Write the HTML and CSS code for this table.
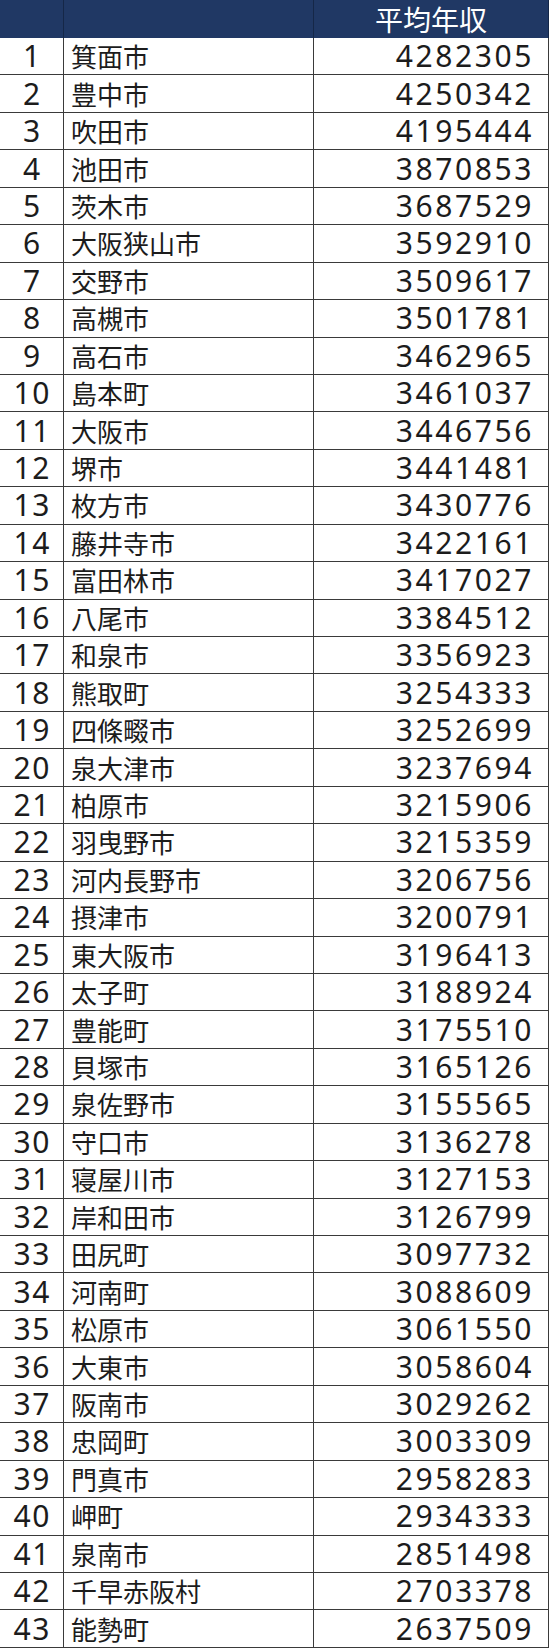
FILE: index.html
```html
<!DOCTYPE html>
<html lang="ja">
<head>
<meta charset="utf-8">
<title>平均年収</title>
<link rel="stylesheet" href="styles.css">
</head>
<body>
<table class="rank">
<colgroup><col class="c-no"><col class="c-name"><col class="c-val"></colgroup>
<thead>
<tr><th></th><th></th><th class="h-val">平均年収</th></tr>
</thead>
<tbody>
<tr><td class="no">1</td><td class="name">箕面市</td><td class="val">4282305</td></tr>
<tr><td class="no">2</td><td class="name">豊中市</td><td class="val">4250342</td></tr>
<tr><td class="no">3</td><td class="name">吹田市</td><td class="val">4195444</td></tr>
<tr><td class="no">4</td><td class="name">池田市</td><td class="val">3870853</td></tr>
<tr><td class="no">5</td><td class="name">茨木市</td><td class="val">3687529</td></tr>
<tr><td class="no">6</td><td class="name">大阪狭山市</td><td class="val">3592910</td></tr>
<tr><td class="no">7</td><td class="name">交野市</td><td class="val">3509617</td></tr>
<tr><td class="no">8</td><td class="name">高槻市</td><td class="val">3501781</td></tr>
<tr><td class="no">9</td><td class="name">高石市</td><td class="val">3462965</td></tr>
<tr><td class="no">10</td><td class="name">島本町</td><td class="val">3461037</td></tr>
<tr><td class="no">11</td><td class="name">大阪市</td><td class="val">3446756</td></tr>
<tr><td class="no">12</td><td class="name">堺市</td><td class="val">3441481</td></tr>
<tr><td class="no">13</td><td class="name">枚方市</td><td class="val">3430776</td></tr>
<tr><td class="no">14</td><td class="name">藤井寺市</td><td class="val">3422161</td></tr>
<tr><td class="no">15</td><td class="name">富田林市</td><td class="val">3417027</td></tr>
<tr><td class="no">16</td><td class="name">八尾市</td><td class="val">3384512</td></tr>
<tr><td class="no">17</td><td class="name">和泉市</td><td class="val">3356923</td></tr>
<tr><td class="no">18</td><td class="name">熊取町</td><td class="val">3254333</td></tr>
<tr><td class="no">19</td><td class="name">四條畷市</td><td class="val">3252699</td></tr>
<tr><td class="no">20</td><td class="name">泉大津市</td><td class="val">3237694</td></tr>
<tr><td class="no">21</td><td class="name">柏原市</td><td class="val">3215906</td></tr>
<tr><td class="no">22</td><td class="name">羽曳野市</td><td class="val">3215359</td></tr>
<tr><td class="no">23</td><td class="name">河内長野市</td><td class="val">3206756</td></tr>
<tr><td class="no">24</td><td class="name">摂津市</td><td class="val">3200791</td></tr>
<tr><td class="no">25</td><td class="name">東大阪市</td><td class="val">3196413</td></tr>
<tr><td class="no">26</td><td class="name">太子町</td><td class="val">3188924</td></tr>
<tr><td class="no">27</td><td class="name">豊能町</td><td class="val">3175510</td></tr>
<tr><td class="no">28</td><td class="name">貝塚市</td><td class="val">3165126</td></tr>
<tr><td class="no">29</td><td class="name">泉佐野市</td><td class="val">3155565</td></tr>
<tr><td class="no">30</td><td class="name">守口市</td><td class="val">3136278</td></tr>
<tr><td class="no">31</td><td class="name">寝屋川市</td><td class="val">3127153</td></tr>
<tr><td class="no">32</td><td class="name">岸和田市</td><td class="val">3126799</td></tr>
<tr><td class="no">33</td><td class="name">田尻町</td><td class="val">3097732</td></tr>
<tr><td class="no">34</td><td class="name">河南町</td><td class="val">3088609</td></tr>
<tr><td class="no">35</td><td class="name">松原市</td><td class="val">3061550</td></tr>
<tr><td class="no">36</td><td class="name">大東市</td><td class="val">3058604</td></tr>
<tr><td class="no">37</td><td class="name">阪南市</td><td class="val">3029262</td></tr>
<tr><td class="no">38</td><td class="name">忠岡町</td><td class="val">3003309</td></tr>
<tr><td class="no">39</td><td class="name">門真市</td><td class="val">2958283</td></tr>
<tr><td class="no">40</td><td class="name">岬町</td><td class="val">2934333</td></tr>
<tr><td class="no">41</td><td class="name">泉南市</td><td class="val">2851498</td></tr>
<tr><td class="no">42</td><td class="name">千早赤阪村</td><td class="val">2703378</td></tr>
<tr><td class="no">43</td><td class="name">能勢町</td><td class="val">2637509</td></tr>
</tbody>
</table>
</body>
</html>
```

FILE: styles.css
```css
html, body {
  margin: 0;
  padding: 0;
  background: #ffffff;
}

.rank {
  border-collapse: separate;
  border-spacing: 0;
  table-layout: fixed;
  width: 549px;
  color: #1c1c1c;
}

.c-no { width: 64px; }
.c-name { width: 250px; }
.c-val { width: 235px; }

.rank th,
.rank td {
  box-sizing: border-box;
  padding: 0;
  border-right: 1px solid #3a3a3a;
  border-bottom: 1px solid #3a3a3a;
  white-space: nowrap;
  vertical-align: middle;
}

.rank thead tr { height: 38px; }

.rank th {
  background: #203864;
  border-bottom: none;
  border-right-color: #152747;
  color: #ffffff;
  font-family: "Noto Sans CJK JP", sans-serif;
  font-weight: 400;
  font-size: 28px;
  line-height: 1;
}

.rank th.h-val {
  text-align: center;
}

.rank tbody tr { height: 37.44px; }

.no {
  text-align: center;
  font-family: "Noto Sans", "DejaVu Sans", sans-serif;
  font-size: 30px;
  letter-spacing: 1.5px;
  text-indent: 1.5px;
  line-height: 1;
}

.name {
  padding-left: 7px !important;
  font-family: "Noto Sans CJK JP", sans-serif;
  font-size: 26px;
  line-height: 1;
}

.val {
  text-align: right;
  padding-right: 14px !important;
  font-family: "Noto Sans", "DejaVu Sans", sans-serif;
  font-size: 30px;
  letter-spacing: 2.6px;
  line-height: 1;
}
```
